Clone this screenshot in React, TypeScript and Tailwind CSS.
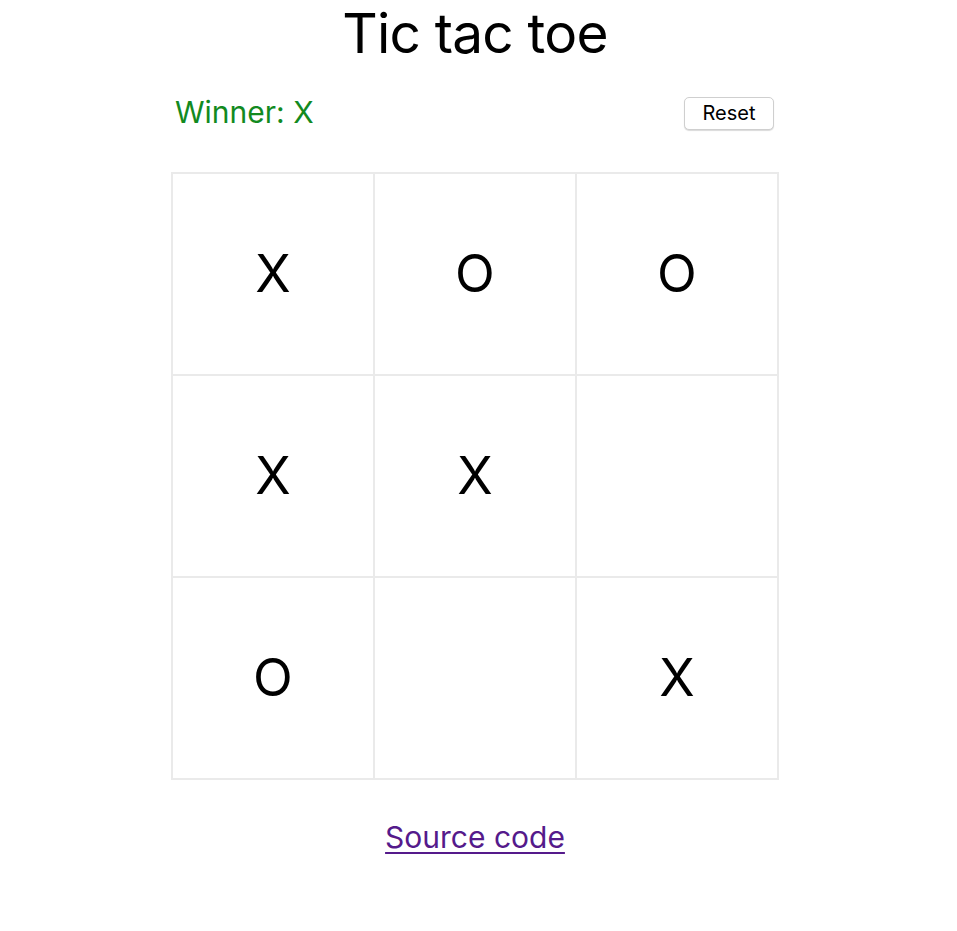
import { useState } from 'react';

type Cell = 'X' | 'O' | null;

// Plateau de départ tel que sur la capture
const INITIAL: Cell[] = ['X', 'O', 'O', 'X', 'X', null, 'O', null, 'X'];

export default function App() {
  const [cells, setCells] = useState<Cell[]>(INITIAL);

  return (
    <div
      className="min-h-screen bg-white text-black flex flex-col items-center pr-[7px]"
      style={{ fontFamily: 'Inter, "Noto Sans", sans-serif' }}
    >
      <h1 className="text-[55px] leading-none mt-[6px] tracking-[-0.8px]">Tic tac toe</h1>

      <div className="w-[608px] mt-[35px]">
        {/* Status + reset */}
        <div className="flex items-center justify-between pl-[4px] pr-[5px] h-[34px]">
          <span className="text-[30px] leading-none text-[#128a1f] -mt-[3px]">Winner: X</span>
          <button
            onClick={() => setCells(Array(9).fill(null))}
            className="w-[90px] h-[33px] rounded-[5px] border border-[#cfcfcf] bg-white text-[20px] leading-none shadow-[0_1px_1px_rgba(0,0,0,0.15)]"
          >
            Reset
          </button>
        </div>

        {/* Board */}
        <div className="mt-[42px] grid grid-cols-3 border border-[#eaeaea]">
          {cells.map((c, i) => (
            <button
              key={i}
              onClick={() => {
                if (c) return;
                const next = [...cells];
                next[i] = 'X';
                setCells(next);
              }}
              className="h-[202px] border border-[#eaeaea] flex items-center justify-center text-[52px] leading-none"
            >
              {c}
            </button>
          ))}
        </div>

        <div className="mt-[42px] flex justify-center">
          <a href="#" className="text-[30px] leading-none text-[#551a8b] underline underline-offset-[4px] decoration-[2px]">
            Source code
          </a>
        </div>
      </div>
    </div>
  );
}
